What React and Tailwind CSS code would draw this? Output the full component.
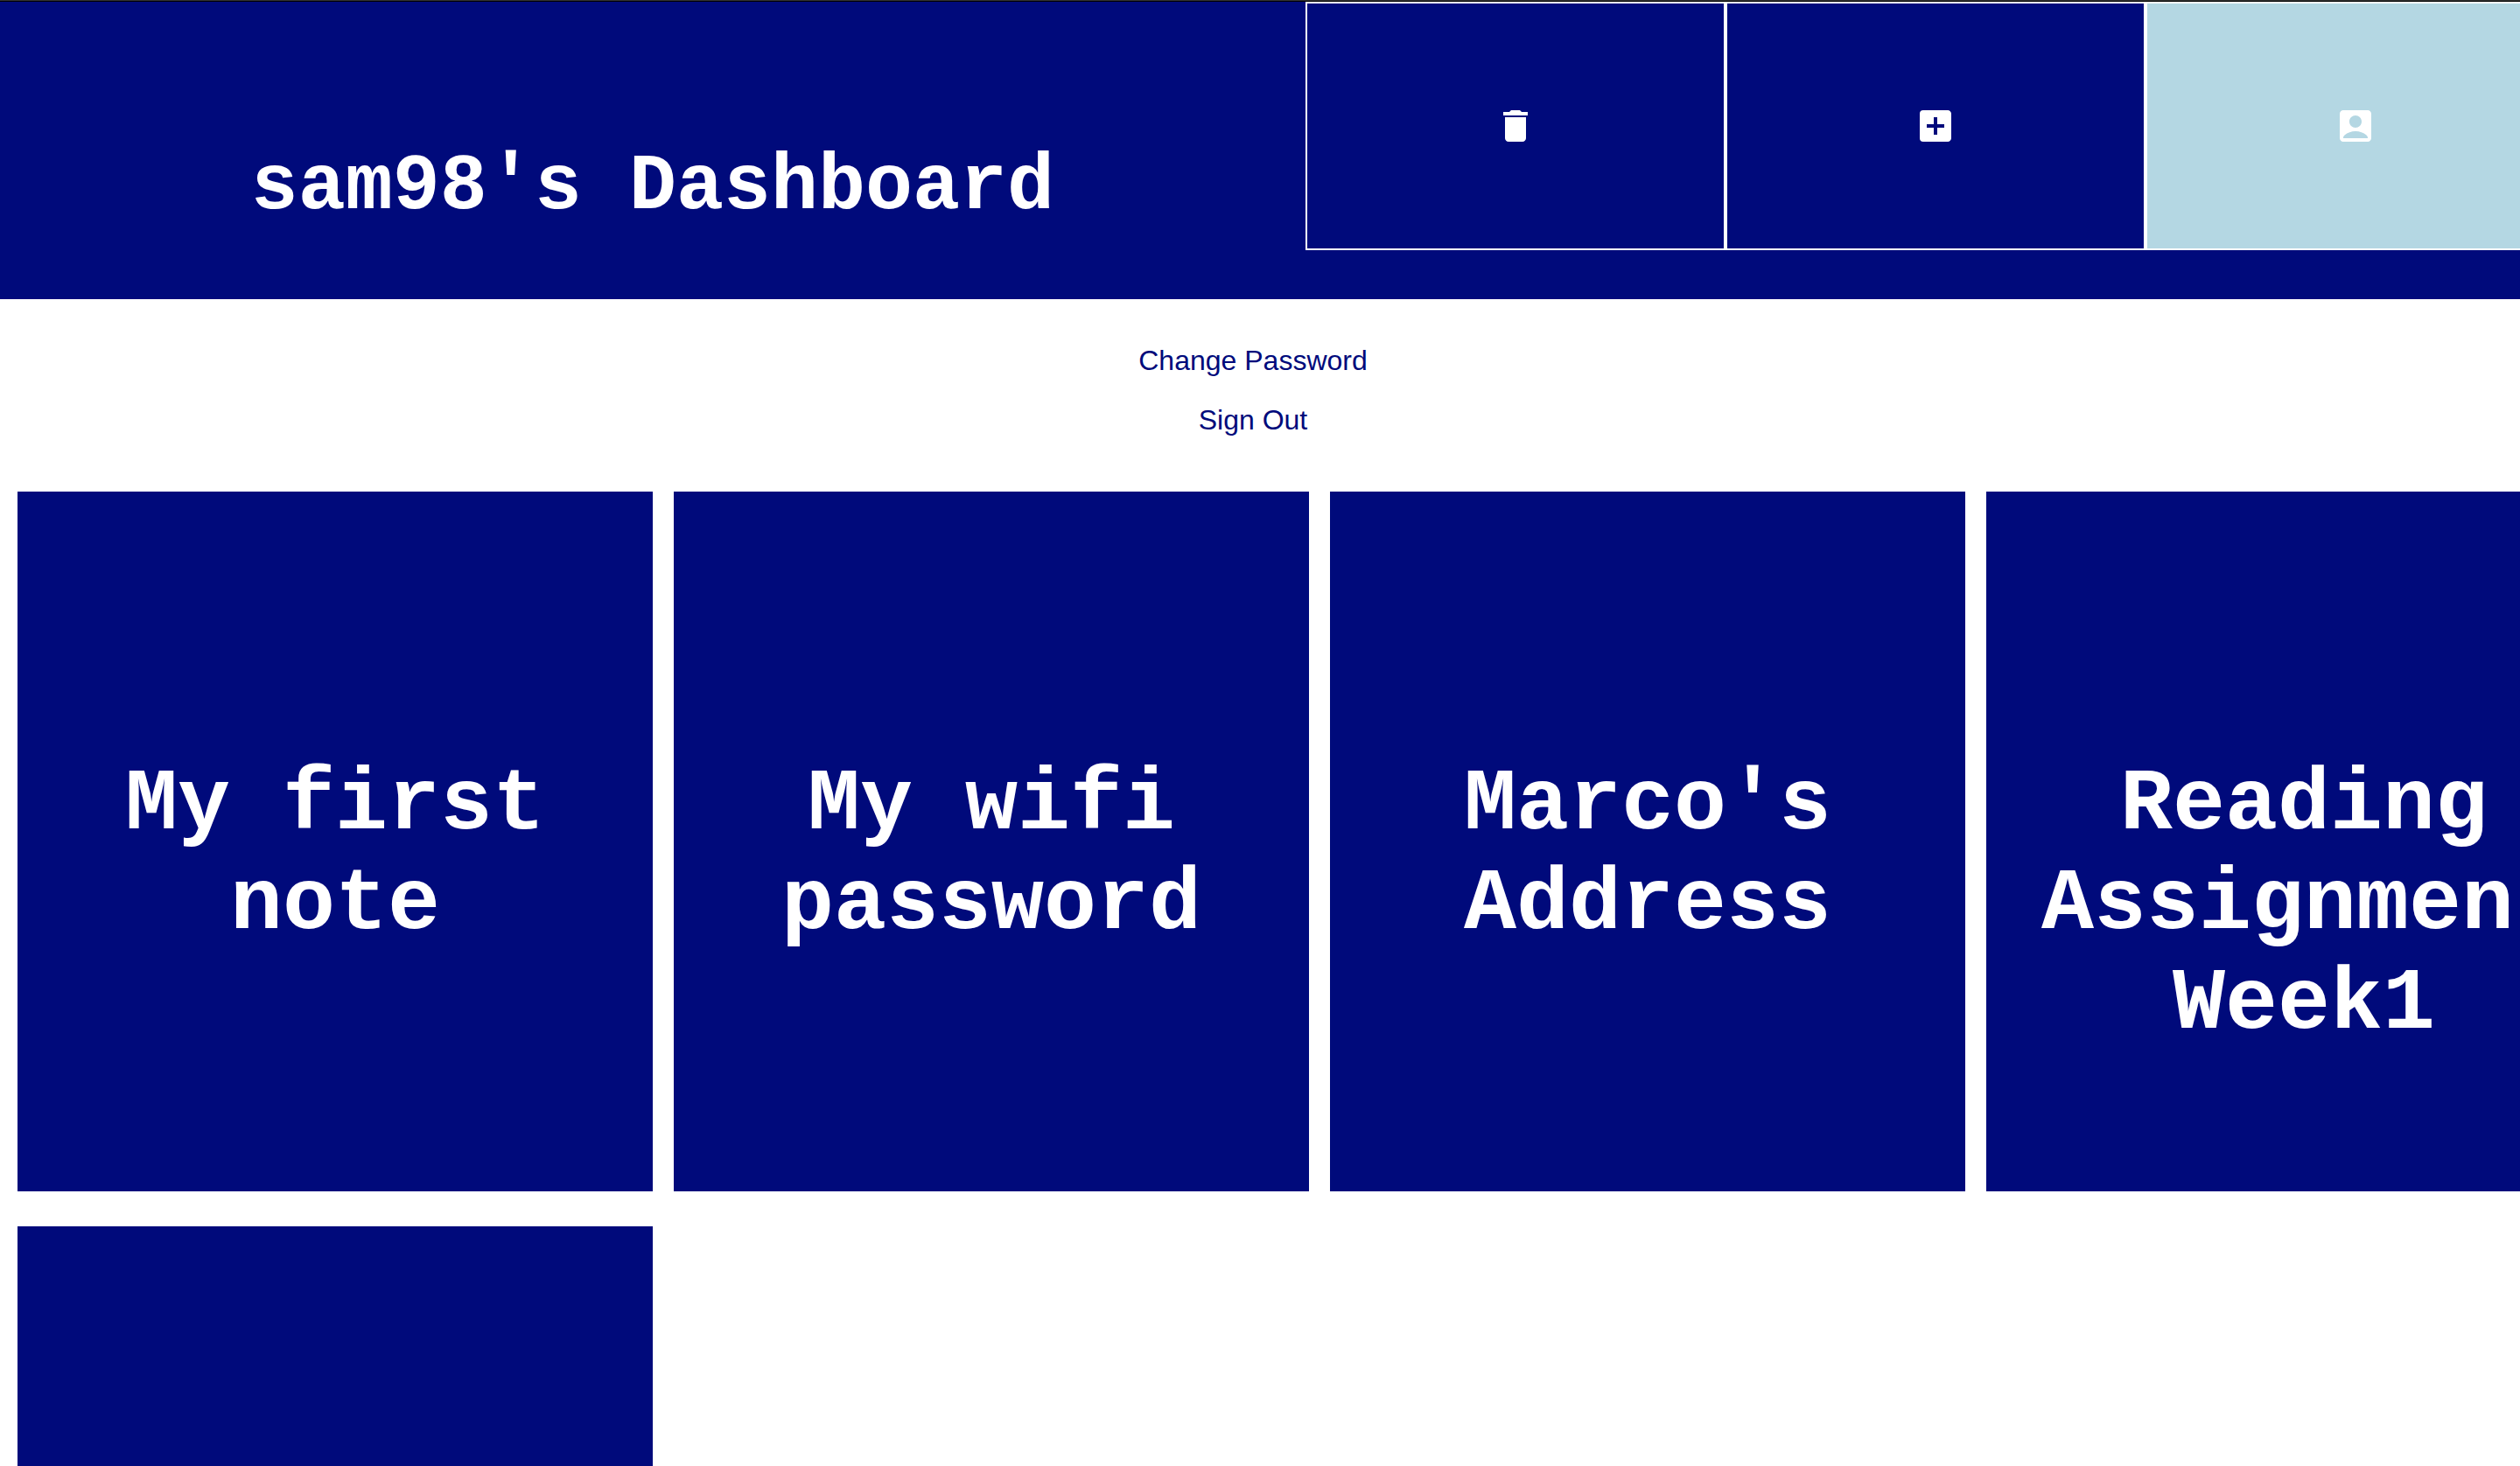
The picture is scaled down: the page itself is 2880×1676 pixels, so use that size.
import React from "react";
import { MdDelete, MdAddBox, MdAccountBox } from "react-icons/md";

const actions = [
  { label: "Delete", Icon: MdDelete, color: "bg-[#000a7b]" },
  { label: "Add", Icon: MdAddBox, color: "bg-[#000a7b]" },
  { label: "Account", Icon: MdAccountBox, color: "bg-[#b4d7e3]" },
];

const notes = ["My first note", "My wifi password", "Marco's Address", "Reading Assignment Week1", ""];

function Header() {
  return (
    <header className="flex items-start bg-[#000a7b] text-white">
      <h1 className="w-[51.8%] shrink-0 pt-[162px] pb-[78px] text-center font-['Courier_New','Liberation_Mono',monospace] text-[90px] leading-[100px] font-bold">
        sam98's Dashboard
      </h1>
      {actions.map(({ label, Icon, color }) => (
        <button
          key={label}
          type="button"
          aria-label={label}
          className={`flex h-[284px] w-1/6 shrink-0 items-center justify-center border-2 border-white ${color}`}
        >
          <Icon className="size-12" />
        </button>
      ))}
    </header>
  );
}

function AccountMenu() {
  return (
    <nav className="flex flex-col items-center gap-8 pt-13 pr-4 pb-16 font-['Liberation_Sans',Arial,sans-serif] text-[32px] leading-9 text-[#000a7b]">
      <a href="#change-password">Change Password</a>
      <a href="#sign-out">Sign Out</a>
    </nav>
  );
}

function NoteCard({ title }) {
  return (
    <button
      type="button"
      className="flex h-[800px] items-start justify-center bg-[#000a7b] pt-[302px] text-center font-['Courier_New','Liberation_Mono',monospace] text-[100px] leading-[114px] font-bold text-white"
    >
      {title}
    </button>
  );
}

export default function App() {
  return (
    <div className="h-screen overflow-hidden border-t border-[#333333] bg-white">
      <div className="border-t border-black">
        <Header />
        <AccountMenu />
        <main className="ml-5 grid w-[calc(100%+96px)] grid-cols-4 gap-x-6 gap-y-10">
          {notes.map((title, i) => (
            <NoteCard key={i} title={title} />
          ))}
        </main>
      </div>
    </div>
  );
}
